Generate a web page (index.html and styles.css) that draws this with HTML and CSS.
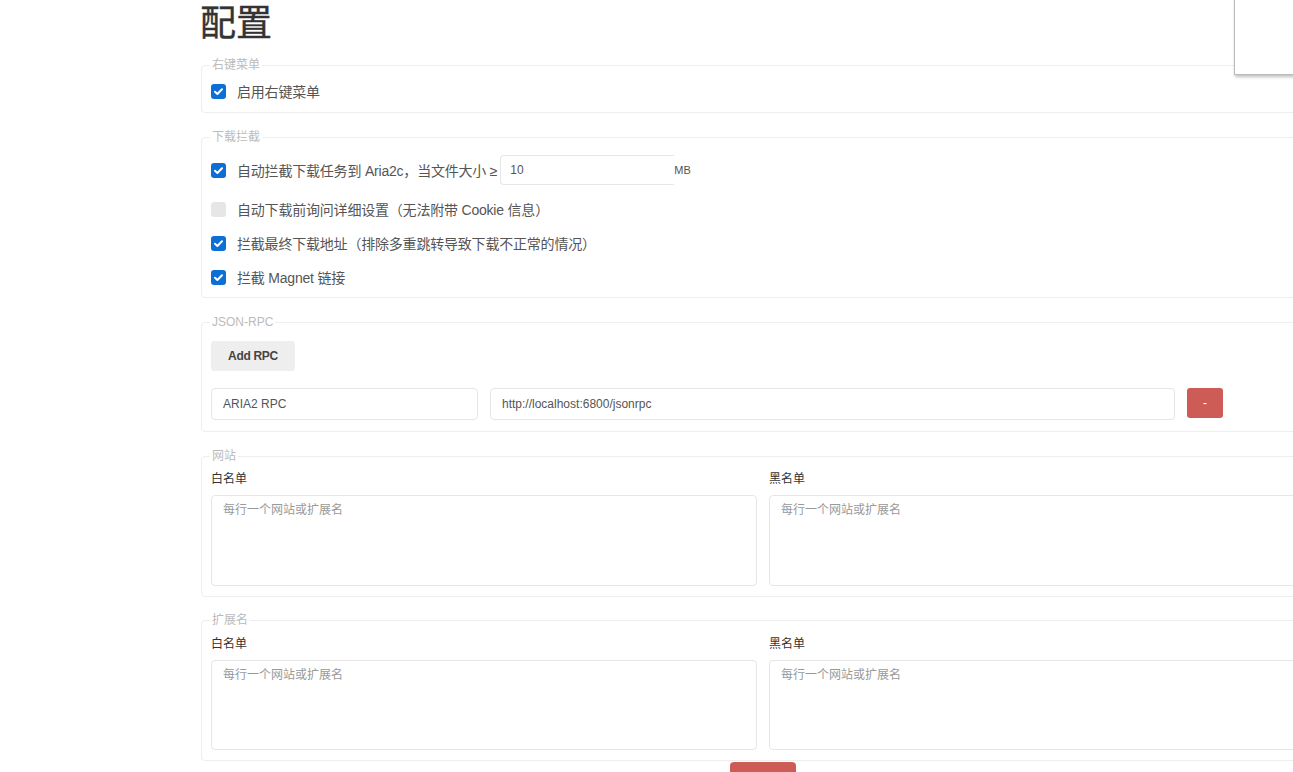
FILE: index.html
```html
<!DOCTYPE html>
<html lang="zh-CN">
<head>
<meta charset="utf-8">
<title>配置</title>
<link rel="stylesheet" href="styles.css">
</head>
<body>
<div class="page">
  <h1 class="title">配置</h1>

  <fieldset class="group g-menu">
    <legend>右键菜单</legend>
    <label class="check-row"><span class="box on"><svg viewBox="0 0 15 15" width="15" height="15"><path d="M4 7.8 L6.4 10 L11 5.2" fill="none" stroke="#fff" stroke-width="2" stroke-linecap="round" stroke-linejoin="round"/></svg></span><span class="txt">启用右键菜单</span></label>
  </fieldset>

  <fieldset class="group g-dl">
    <legend>下载拦截</legend>
    <div class="check-row first">
      <span class="box on"><svg viewBox="0 0 15 15" width="15" height="15"><path d="M4 7.8 L6.4 10 L11 5.2" fill="none" stroke="#fff" stroke-width="2" stroke-linecap="round" stroke-linejoin="round"/></svg></span>
      <span class="txt">自动拦截下载任务到 Aria2c，当文件大小 ≥</span>
      <span class="size-input">10</span>
      <span class="unit">MB</span>
    </div>
    <label class="check-row"><span class="box off"></span><span class="txt">自动下载前询问详细设置（无法附带 Cookie 信息）</span></label>
    <label class="check-row"><span class="box on"><svg viewBox="0 0 15 15" width="15" height="15"><path d="M4 7.8 L6.4 10 L11 5.2" fill="none" stroke="#fff" stroke-width="2" stroke-linecap="round" stroke-linejoin="round"/></svg></span><span class="txt">拦截最终下载地址（排除多重跳转导致下载不正常的情况）</span></label>
    <label class="check-row"><span class="box on"><svg viewBox="0 0 15 15" width="15" height="15"><path d="M4 7.8 L6.4 10 L11 5.2" fill="none" stroke="#fff" stroke-width="2" stroke-linecap="round" stroke-linejoin="round"/></svg></span><span class="txt">拦截 Magnet 链接</span></label>
  </fieldset>

  <fieldset class="group g-rpc">
    <legend>JSON-RPC</legend>
    <button class="btn-add" type="button">Add RPC</button>
    <div class="rpc-row">
      <div class="field f-name">ARIA2 RPC</div>
      <div class="field f-url">http://localhost:6800/jsonrpc</div>
      <button class="btn-del" type="button">-</button>
    </div>
  </fieldset>

  <fieldset class="group g-list">
    <legend>网站</legend>
    <div class="cols">
      <div class="col">
        <div class="lbl">白名单</div>
        <div class="area">每行一个网站或扩展名</div>
      </div>
      <div class="col">
        <div class="lbl">黑名单</div>
        <div class="area">每行一个网站或扩展名</div>
      </div>
    </div>
  </fieldset>

  <fieldset class="group g-list g-ext">
    <legend>扩展名</legend>
    <div class="cols">
      <div class="col">
        <div class="lbl">白名单</div>
        <div class="area short">每行一个网站或扩展名</div>
      </div>
      <div class="col">
        <div class="lbl">黑名单</div>
        <div class="area short">每行一个网站或扩展名</div>
      </div>
    </div>
  </fieldset>

  <div class="actions"><button class="btn-save" type="button">保存</button></div>
</div>
<div class="popup"></div>
</body>
</html>
```

FILE: styles.css
```css
html, body {
  margin: 0;
  padding: 0;
  overflow: hidden;
  background: #fff;
}
body {
  font-family: "Liberation Sans", Arial, "Noto Sans CJK SC", sans-serif;
  color: #555;
  font-size: 14px;
}
.page {
  width: 1126px;
  margin-left: 201px;
}
.title {
  margin: -3px 0 -2px -1px;
  font-size: 36px;
  line-height: 46px;
  font-weight: 400;
  color: #333;
  font-family: "Noto Sans CJK SC", sans-serif;
  -webkit-text-stroke: 0.4px #333;
}
.group {
  margin: 16px 0 0 0;
  padding: 0 10px 11px 9px;
  border: 1px solid #eeeeee;
  border-radius: 4px;
  min-width: 0;
}
.group legend {
  font-size: 12px;
  line-height: 16px;
  color: #bbb;
  padding: 0 2px;
  margin-left: -1px;
  font-family: "Liberation Sans", Arial, "Noto Sans CJK SC", sans-serif;
}
.check-row {
  display: flex;
  align-items: center;
  height: 20px;
  margin-top: 14px;
}
.g-menu .check-row { margin-top: 8px; }
.g-dl { padding-bottom: 10px; }
.check-row.first {
  height: 30px;
  margin-top: 10px;
  margin-bottom: 1px;
}
.box {
  width: 15px;
  height: 15px;
  border-radius: 3px;
  flex: none;
  display: block;
}
.box svg { display: block; }
.box.on { background: #0d6fd6; }
.box.off { background: #e6e6e6; }
.txt {
  margin-left: 11px;
  font-size: 14px;
  color: #555;
  white-space: nowrap;
  letter-spacing: -0.2px;
}
.size-input {
  box-sizing: border-box;
  width: 174px;
  height: 30px;
  margin-left: 3px;
  border: 1px solid #e6e6e6;
  border-right: none;
  border-radius: 4px 0 0 4px;
  padding: 0 9px;
  font-size: 12px;
  line-height: 28px;
  color: #555;
}
.unit {
  font-size: 11px;
  color: #555;
  margin-top: -1px;
}
.btn-add {
  display: block;
  margin-top: 11px;
  width: 84px;
  height: 30px;
  border: none;
  border-radius: 3px;
  background: #eeeeee;
  color: #444;
  font-family: "Liberation Sans", Arial, sans-serif;
  font-size: 12px;
  font-weight: 700;
  letter-spacing: -0.3px;
  padding: 0;
}
.rpc-row {
  display: flex;
  gap: 12px;
  margin-top: 17px;
  align-items: flex-start;
}
.g-rpc { padding-bottom: 11px; }
.field {
  box-sizing: border-box;
  height: 32px;
  border: 1px solid #e6e6e6;
  border-radius: 4px;
  padding: 0 11px;
  font-size: 12px;
  line-height: 30px;
  color: #555;
}
.f-name { width: 267px; }
.f-url { width: 685px; }
.btn-del {
  width: 36px;
  height: 30px;
  border: none;
  border-radius: 3px;
  background: #cd5c56;
  color: #fff;
  font-size: 12px;
  padding: 0;
  font-family: "Liberation Sans", Arial, sans-serif;
}
.cols {
  display: grid;
  grid-template-columns: 546px 546px;
  column-gap: 12px;
  margin-top: 7px;
}
.lbl {
  font-size: 12px;
  line-height: 17px;
  color: #333;
  margin-bottom: 7px;
}
.area {
  box-sizing: border-box;
  height: 91px;
  border: 1px solid #e6e6e6;
  border-radius: 4px;
  padding: 5px 11px;
  font-size: 12px;
  line-height: 18px;
  color: #999;
}
.g-list { padding-bottom: 10px; }
.area.short { height: 90px; }
.g-ext { margin-top: 15px; }
.g-ext .cols { margin-top: 8px; }
.actions {
  display: flex;
  justify-content: center;
  padding-top: 1px;
  padding-right: 2px;
}
.btn-save {
  width: 66px;
  height: 34px;
  border: none;
  border-radius: 4px;
  background: #cd5c56;
  color: #fff;
  font-size: 14px;
  font-family: "Noto Sans CJK SC", sans-serif;
}
.popup {
  position: absolute;
  top: -2px;
  left: 1234px;
  width: 80px;
  height: 75px;
  background: #fff;
  border: 1px solid #bbb;
  box-shadow: 1px 2px 3px rgba(0,0,0,0.25);
}
```
